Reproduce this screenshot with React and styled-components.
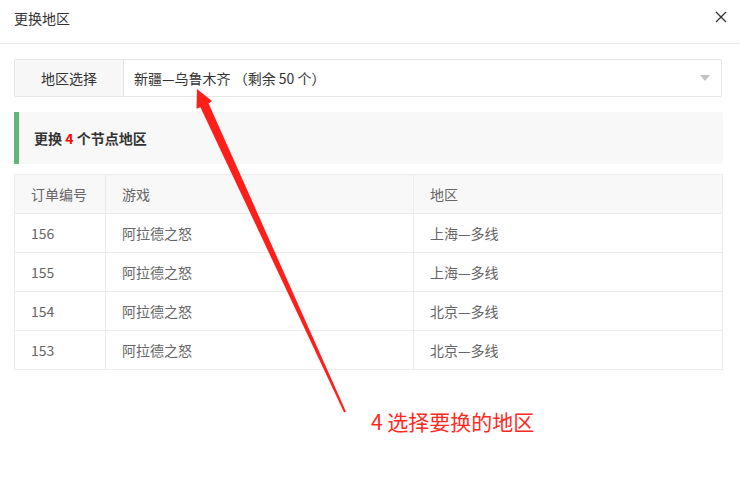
import React from "react";
import styled, { createGlobalStyle } from "styled-components";

const Global = createGlobalStyle`
  html, body { margin: 0; padding: 0; background: #fff; }
  body {
    font-family: "Noto Sans CJK SC", "Liberation Sans", sans-serif;
    color: #333;
  }
`;

const Page = styled.div`
  position: relative;
  width: 740px;
  height: 491px;
  background: #fff;
  overflow: hidden;
`;

const Header = styled.div`
  height: 44px;
  border-bottom: 1px solid #ececec;
  display: flex;
  align-items: flex-start;
  justify-content: space-between;
  padding: 10px 12px 0 14px;
  box-sizing: border-box;
`;

const Title = styled.div`
  font-size: 14px;
  line-height: 16px;
  color: #333;
`;

const Close = styled.div`
  width: 14px;
  height: 14px;
  display: flex;
  align-items: center;
  justify-content: center;
`;

const Body = styled.div`
  padding: 15px 17px 0 14px;
  display: flex;
  flex-direction: column;
`;

const Select = styled.div`
  display: flex;
  height: 38px;
  box-sizing: border-box;
  border: 1px solid #e6e6e6;
  border-radius: 2px;
  font-size: 14px;
  margin-right: 1px;
`;

const SelectLabel = styled.div`
  width: 108px;
  background: #f7f7f7;
  border-right: 1px solid #e6e6e6;
  display: flex;
  align-items: center;
  justify-content: center;
  color: #333;
`;

const SelectValue = styled.div`
  flex: 1;
  display: flex;
  align-items: center;
  justify-content: space-between;
  padding: 0 11px 0 10px;
  color: #333;
`;

const Caret = styled.span`
  width: 0;
  height: 0;
  border-left: 5px solid transparent;
  border-right: 5px solid transparent;
  border-top: 6px solid #c2c2c2;
`;

const Notice = styled.div`
  margin-top: 15px;
  height: 52px;
  box-sizing: border-box;
  background: #f8f8f8;
  border-left: 5px solid #5fb878;
  border-radius: 0 2px 2px 0;
  display: flex;
  align-items: center;
  padding-left: 15px;
  font-size: 14px;
  font-weight: bold;
  color: #333;
  white-space: pre;
`;

const Red = styled.span`
  color: #ff0000;
`;

const Table = styled.table`
  margin-top: 10px;
  width: 709px;
  border-collapse: collapse;
  font-size: 14px;
  color: #666;
  table-layout: fixed;
`;

const Th = styled.th`
  background: #f8f8f8;
  font-weight: normal;
  text-align: left;
  height: 39px;
  padding: 0 0 0 16px;
  border: 1px solid #ececec;
  width: ${(p) => p.$w || "auto"};
  box-sizing: border-box;
`;

const Td = styled.td`
  height: 39px;
  padding: 0 0 0 16px;
  border: 1px solid #ececec;
  box-sizing: border-box;
`;

const Overlay = styled.svg`
  position: absolute;
  left: 0;
  top: 0;
  pointer-events: none;
`;

const Annotation = styled.div`
  position: absolute;
  left: 371px;
  top: 407px;
  font-size: 21px;
  line-height: 29px;
  color: #ff2a1f;
  white-space: pre;
`;

const rows = [
  ["156", "阿拉德之怒", "上海—多线"],
  ["155", "阿拉德之怒", "上海—多线"],
  ["154", "阿拉德之怒", "北京—多线"],
  ["153", "阿拉德之怒", "北京—多线"],
];

export default function App() {
  return (
    <Page>
      <Global />
      <Header>
        <Title>更换地区</Title>
        <Close>
          <svg width="12" height="12" viewBox="0 0 12 12">
            <path d="M1 1L11 11M11 1L1 11" stroke="#333" strokeWidth="1.3" />
          </svg>
        </Close>
      </Header>
      <Body>
        <Select>
          <SelectLabel>地区选择</SelectLabel>
          <SelectValue>
            <span>新疆—乌鲁木齐 （剩余 50 个）</span>
            <Caret />
          </SelectValue>
        </Select>
        <Notice>
          {"更换 "}
          <Red>4</Red>
          {" 个节点地区"}
        </Notice>
        <Table>
          <thead>
            <tr>
              <Th $w="91px">订单编号</Th>
              <Th $w="308px">游戏</Th>
              <Th>地区</Th>
            </tr>
          </thead>
          <tbody>
            {rows.map((r) => (
              <tr key={r[0]}>
                <Td>{r[0]}</Td>
                <Td>{r[1]}</Td>
                <Td>{r[2]}</Td>
              </tr>
            ))}
          </tbody>
        </Table>
      </Body>
      <Overlay width="740" height="491" viewBox="0 0 740 491">
        <polygon
          points="197,89 212,101 208.6,103.5 345.9,411.6 344.1,412.4 200.4,107.3 196.5,108.7"
          fill="#ff1f1a"
        />
      </Overlay>
      <Annotation>4 选择要换的地区</Annotation>
    </Page>
  );
}
